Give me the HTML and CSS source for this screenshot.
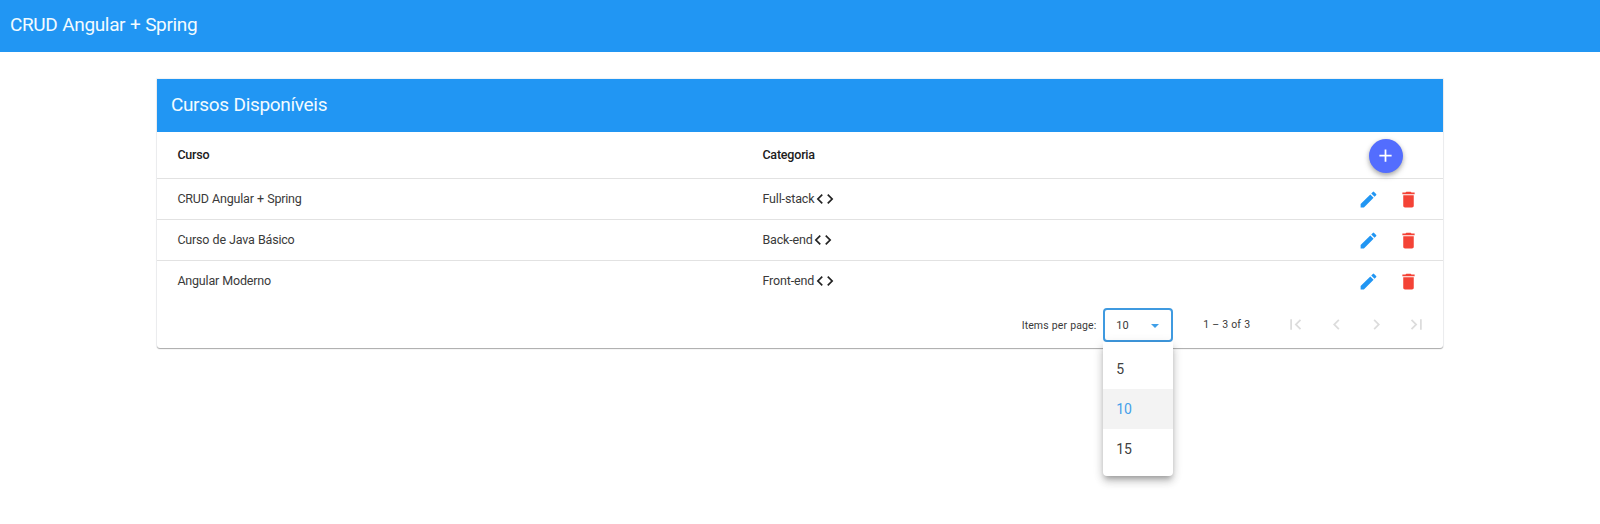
FILE: index.html
```html
<!DOCTYPE html>
<html lang="pt-BR">
<head>
<meta charset="utf-8">
<title>CRUD Angular + Spring</title>
<link rel="stylesheet" href="styles.css">
</head>
<body>
<svg class="defs" aria-hidden="true">
<symbol id="code" viewBox="0 0 24 24"><path d="M9.4 16.6 4.8 12l4.6-4.6L8 6l-6 6 6 6 1.4-1.4zm5.2 0 4.6-4.6-4.6-4.6L16 6l6 6-6 6-1.4-1.4z"/></symbol>
<symbol id="edit" viewBox="0 0 24 24"><path d="M3 17.25V21h3.75L17.81 9.94l-3.75-3.75L3 17.25zM20.71 7.04a1 1 0 0 0 0-1.41l-2.34-2.34a1 1 0 0 0-1.41 0l-1.83 1.83 3.75 3.75 1.83-1.83z"/></symbol>
<symbol id="trash" viewBox="0 0 24 24"><path d="M6 19c0 1.1.9 2 2 2h8c1.1 0 2-.9 2-2V7H6v12zM19 4h-3.5l-1-1h-5l-1 1H5v2h14V4z"/></symbol>
</svg>
<header class="toolbar">CRUD Angular + Spring</header>
<main class="card">
<h1 class="card-title">Cursos Disponíveis</h1>
<div class="row head"><span>Curso</span><span>Categoria</span><div class="actions"><button class="fab" aria-label="Novo"><svg viewBox="0 0 24 24"><path d="M19 13h-6v6h-2v-6H5v-2h6V5h2v6h6v2z"/></svg></button></div></div>
<div class="row"><span>CRUD Angular + Spring</span><span class="category">Full-stack<svg><use href="#code"/></svg></span><div class="actions"><svg class="edit"><use href="#edit"/></svg><svg class="trash"><use href="#trash"/></svg></div></div>
<div class="row"><span>Curso de Java Básico</span><span class="category">Back-end<svg><use href="#code"/></svg></span><div class="actions"><svg class="edit"><use href="#edit"/></svg><svg class="trash"><use href="#trash"/></svg></div></div>
<div class="row last"><span>Angular Moderno</span><span class="category">Front-end<svg><use href="#code"/></svg></span><div class="actions"><svg class="edit"><use href="#edit"/></svg><svg class="trash"><use href="#trash"/></svg></div></div>
<footer class="paginator">
<span class="page-label">Items per page:</span>
<div class="select"><span>10</span><i class="arrow"></i>
<div class="panel"><div class="option">5</div><div class="option selected">10</div><div class="option">15</div></div>
</div>
<span class="range">1 – 3 of 3</span>
<nav class="pages">
<svg viewBox="0 0 24 24"><path d="M18.41 16.59 13.82 12l4.59-4.59L17 6l-6 6 6 6zM6 6h2v12H6z"/></svg>
<svg viewBox="0 0 24 24"><path d="M15.41 7.41 14 6l-6 6 6 6 1.41-1.41L10.83 12z"/></svg>
<svg viewBox="0 0 24 24"><path d="M10 6 8.59 7.41 13.17 12l-4.58 4.59L10 18l6-6z"/></svg>
<svg viewBox="0 0 24 24"><path d="M5.59 7.41 10.18 12l-4.59 4.59L7 18l6-6-6-6zM16 6h2v12h-2z"/></svg>
</nav>
</footer>
</main>
</body>
</html>
```
FILE: styles.css
```css
* { box-sizing: border-box; }
body { margin: 0; min-height: 524px; background: #fff; color: #3a3a3a; font-family: Roboto, "Liberation Sans", sans-serif; }
svg { display: block; fill: currentColor; flex: none; }
.defs { display: none; }
.toolbar { height: 52px; padding: 0 0 3px 10px; display: flex; align-items: center; background: #2196f3; color: #f2fbff; font-size: 19px; letter-spacing: -.35px; word-spacing: .4px; }
.card { width: 1286px; height: 269px; margin: 27px 0 0 157.4px; border-radius: 0 0 3px 3px; background: #fff; box-shadow: 0 1px 1px #aaa, 0 0 1px 1px #f1f2f4; }
.card-title { height: 53px; margin: 0; padding: 0 13.5px 2px; display: flex; align-items: center; background: #2196f3; color: #f2fbff; font-size: 19px; font-weight: 400; letter-spacing: -.32px; word-spacing: .4px; }
.row { height: 41px; padding-left: 20px; display: grid; grid-template-columns: 585px 1fr 110px; align-items: center; border-bottom: 1px solid #e2e2e2; font-size: 12.5px; letter-spacing: -.2px; word-spacing: .4px; }
.row > span { padding-bottom: 2px; }
.head { height: 47px; font-weight: 500; color: #202020; }
.last { border-bottom-color: transparent; }
.category { display: flex; align-items: center; letter-spacing: -.14px; }
.category svg { width: 20px; height: 20px; margin: 2px 0 0 .5px; color: #222; }
.actions { display: flex; align-items: center; gap: 19px; padding-left: 24.6px; }
.actions > svg { width: 21px; height: 21px; }
.edit { color: #2196f3; }
.trash { color: #f44336; }
.fab { width: 34px; height: 34px; margin: 1px 0 0 10.6px; padding: 0; border: 0; border-radius: 50%; display: grid; place-items: center; background: #536dfe; color: #fff; box-shadow: 0 2px 4px rgba(0,0,0,.25), 0 3px 7px rgba(0,0,0,.14); }
.fab svg { width: 21px; height: 21px; }
.paginator { height: 46px; display: flex; align-items: center; justify-content: flex-end; padding-right: 16.5px; font-size: 10.5px; letter-spacing: .1px; word-spacing: .4px; }
.page-label { margin-right: 7px; }
.select { position: relative; width: 70px; height: 34px; display: flex; align-items: center; justify-content: space-between; border: 2px solid #3f9ae0; border-radius: 4px; padding: 0 11px; font-size: 11px; }
.arrow { border: 4px solid transparent; border-top-color: #3f9fe8; border-bottom: 0; margin: 1px 1px 0 0; }
.panel { position: absolute; z-index: 2; top: 32px; left: -2px; width: 70px; height: 134px; padding: 7px 0; background: #fff; border-radius: 0 0 4px 4px; box-shadow: 0 4px 5px -2px rgba(0,0,0,.22), 0 6px 9px rgba(0,0,0,.16), 0 2px 12px rgba(0,0,0,.12); }
.option { height: 40px; padding-left: 12.8px; display: flex; align-items: center; font-size: 14px; color: #404040; letter-spacing: -.1px; }
.selected { background: #f3f3f3; color: #43a0ea; }
.range { margin-left: 30px; width: 82px; padding-bottom: 1px; letter-spacing: .05px; }
.pages { display: flex; gap: 19.2px; color: #dcdcdc; }
.pages svg { width: 21px; height: 21px; margin-bottom: 1px; }
```
